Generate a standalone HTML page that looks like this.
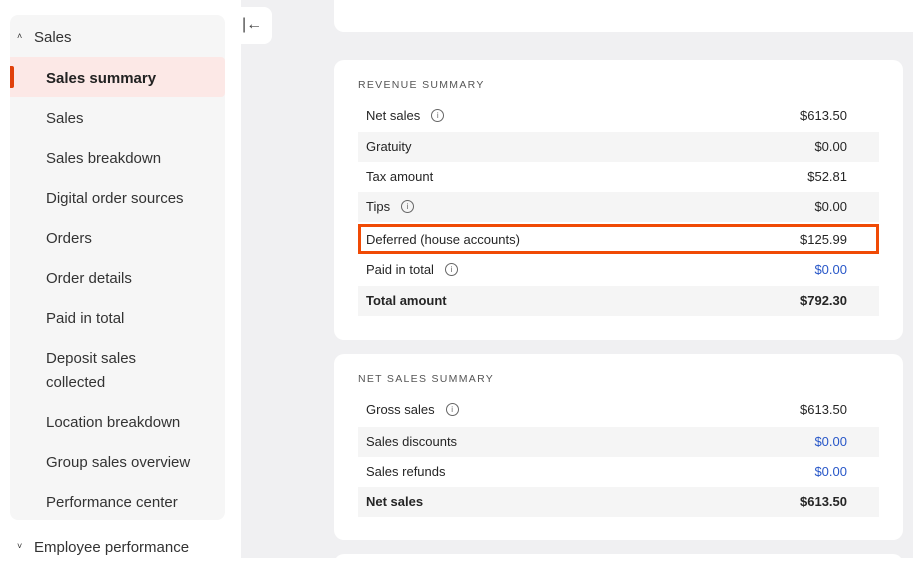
<!DOCTYPE html><html><head><style>
*{margin:0;padding:0;box-sizing:border-box}
body{width:913px;height:558px;overflow:hidden;background:#fff;font-family:"Liberation Sans",sans-serif;color:#252525;position:relative}
.main{position:absolute;left:241px;top:0;width:672px;height:558px;background:#f0f0f2}
.side{position:absolute;left:10px;top:15px;width:215px;height:505px;background:#f6f6f6;border-radius:8px}
.it{position:absolute;left:46px;font-size:15px;color:#333}
.sel{position:absolute;left:10px;top:57px;width:215px;height:40px;background:#fce8e6;border-radius:0 4px 4px 0}
.bar{position:absolute;left:10px;top:66px;width:4px;height:22px;background:#e0400a;border-radius:0 2px 2px 0}
.card{position:absolute;background:#fff;border-radius:10px}
.ttl{position:absolute;left:24px;font-size:10.5px;letter-spacing:1.3px;color:#555}
.row{position:absolute;left:24px;width:521px;height:30px;font-size:13px;line-height:30px;padding:0 8px}
.row .v{position:absolute;right:32px;top:0}
.s{background:#f5f5f5}
.b{font-weight:bold}
.blue{color:#2857c8}
.i{display:inline-block;width:13px;height:13px;border:1px solid #666;border-radius:50%;font-size:8px;line-height:11px;text-align:center;margin-left:11px;vertical-align:middle;margin-top:-3px;color:#666}
</style></head><body>
<div class="main"></div>
<div class="side"></div>
<div class="sel"></div><div class="bar"></div>
<div class="it" style="left:17px;top:31px;font-size:9px">˄</div>
<div class="it" style="left:34px;top:29px">Sales</div>
<div class="it b" style="top:70px;color:#222">Sales summary</div>
<div class="it" style="top:110px">Sales</div>
<div class="it" style="top:150px">Sales breakdown</div>
<div class="it" style="top:190px">Digital order sources</div>
<div class="it" style="top:230px">Orders</div>
<div class="it" style="top:270px">Order details</div>
<div class="it" style="top:310px">Paid in total</div>
<div class="it" style="top:347px;line-height:24px">Deposit sales<br>collected</div>
<div class="it" style="top:414px">Location breakdown</div>
<div class="it" style="top:454px">Group sales overview</div>
<div class="it" style="top:494px">Performance center</div>
<div class="it" style="left:17px;top:541px;font-size:9px">˅</div>
<div class="it" style="left:34px;top:539px">Employee performance</div>
<div class="card" style="left:241px;top:7px;width:31px;height:37px;border-radius:0 8px 8px 0;font-size:16px;line-height:36px;color:#444;padding-left:1px">|←</div>
<div class="card" style="left:334px;top:-10px;width:590px;height:42px"></div>
<div class="card" style="left:334px;top:60px;width:569px;height:280px">
<div class="ttl" style="top:19px">REVENUE SUMMARY</div>
<div class="row" style="top:41px">Net sales<span class="i">i</span><span class="v">$613.50</span></div>
<div class="row s" style="top:72px">Gratuity<span class="v">$0.00</span></div>
<div class="row" style="top:102px">Tax amount<span class="v">$52.81</span></div>
<div class="row s" style="top:132px">Tips<span class="i">i</span><span class="v">$0.00</span></div>
<div class="row" style="top:164px;border:3px solid #f04a05;line-height:25px;padding:0 5px">Deferred (house accounts)<span class="v" style="right:29px">$125.99</span></div>
<div class="row" style="top:195px">Paid in total<span class="i">i</span><span class="v blue">$0.00</span></div>
<div class="row s b" style="top:226px">Total amount<span class="v">$792.30</span></div>
</div>
<div class="card" style="left:334px;top:354px;width:569px;height:186px">
<div class="ttl" style="top:19px">NET SALES SUMMARY</div>
<div class="row" style="top:41px">Gross sales<span class="i">i</span><span class="v">$613.50</span></div>
<div class="row s" style="top:73px">Sales discounts<span class="v blue">$0.00</span></div>
<div class="row" style="top:103px">Sales refunds<span class="v blue">$0.00</span></div>
<div class="row s b" style="top:133px">Net sales<span class="v">$613.50</span></div>
</div>
<div class="card" style="left:334px;top:554px;width:569px;height:20px"></div>
</body></html>
